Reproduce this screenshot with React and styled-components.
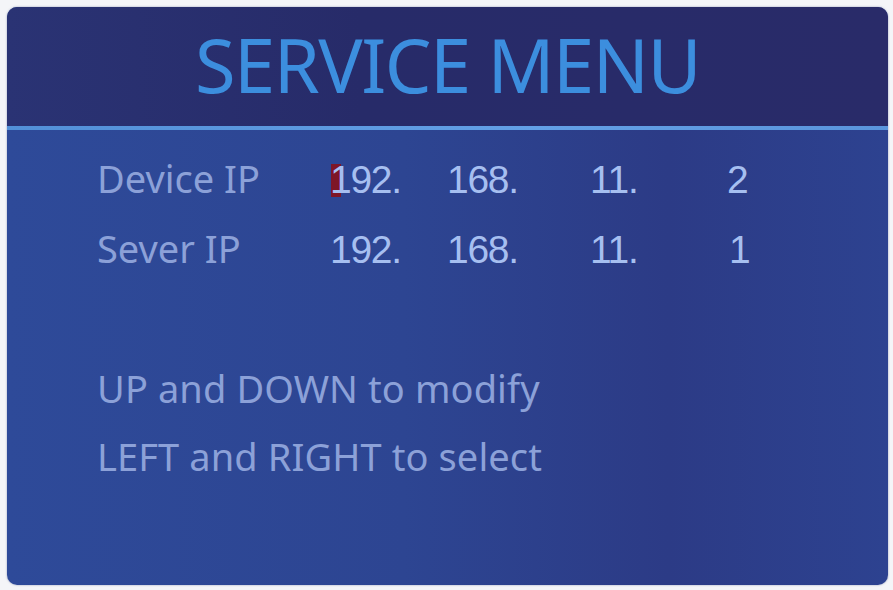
import React from "react";
import styled, { createGlobalStyle } from "styled-components";

const Global = createGlobalStyle`
  html, body { margin: 0; padding: 0; background: #f4f5f8; }
  #root { width: 893px; height: 590px; }
`;

const Page = styled.div`
  width: 893px;
  height: 590px;
  box-sizing: border-box;
  padding: 7px 5px 5px 7px;
  background: #f4f5f8;
`;

const Screen = styled.div`
  width: 100%;
  height: 100%;
  border-radius: 10px;
  overflow: hidden;
  display: flex;
  flex-direction: column;
  background: linear-gradient(90deg, #2e4a99 0%, #2d4592 45%, #2c3b86 75%, #2d4290 100%);
  box-shadow: 0 0 2px rgba(40, 60, 120, 0.5);
`;

const Header = styled.div`
  height: 119px;
  display: flex;
  align-items: flex-start;
  justify-content: center;
  background: linear-gradient(90deg, #2a3374 0%, #272b69 40%, #292b69 100%);
`;

const Title = styled.h1`
  margin: 0;
  margin-top: 21px;
  font-family: "Noto Sans", "Open Sans", sans-serif;
  font-weight: 400;
  font-size: 74px;
  letter-spacing: -1.5px;
  line-height: 1;
  color: #3c8ede;
`;

const Rule = styled.div`
  height: 4px;
  background: linear-gradient(90deg, #5290d8, #63a0e6 60%, #5a95dc);
`;

const Body = styled.div`
  flex: 1;
  padding: 24px 0 0 90px;
  display: flex;
  flex-direction: column;
`;

const IpGrid = styled.div`
  display: grid;
  grid-template-columns: 233px 117px 143px 137px auto;
  row-gap: 20px;
  align-items: baseline;
`;

const Label = styled.div`
  font-family: "Noto Sans", sans-serif;
  font-size: 38px;
  line-height: 48px;
  color: #8ca1d8;
`;

const Num = styled.div`
  font-family: "Liberation Sans", Arial, sans-serif;
  font-size: 39px;
  line-height: 48px;
  letter-spacing: -1.3px;
  color: #a6bff0;
  padding-left: ${(p) => p.$pad || 0}px;
`;

const Cursor = styled.span`
  position: relative;
  &::before {
    content: "";
    position: absolute;
    left: 1px;
    top: 6px;
    width: 10px;
    height: 33px;
    background: #7e1627;
    z-index: 0;
  }
  & > span { position: relative; z-index: 1; }
`;

const Help = styled.div`
  margin-top: 90px;
  display: flex;
  flex-direction: column;
  gap: 20px;
`;

const HelpLine = styled.div`
  font-family: "Noto Sans", sans-serif;
  font-size: 38px;
  line-height: 48px;
  letter-spacing: 0.1px;
  color: #8ca1d8;
`;

export default function App() {
  return (
    <Page>
      <Global />
      <Screen>
        <Header>
          <Title>SERVICE MENU</Title>
        </Header>
        <Rule />
        <Body>
          <IpGrid>
            <Label>Device IP</Label>
            <Num><Cursor><span>1</span></Cursor>92.</Num>
            <Num>168.</Num>
            <Num>11.</Num>
            <Num>2</Num>
            <Label>Sever IP</Label>
            <Num>192.</Num>
            <Num>168.</Num>
            <Num>11.</Num>
            <Num $pad={2}>1</Num>
          </IpGrid>
          <Help>
            <HelpLine>UP and DOWN to modify</HelpLine>
            <HelpLine>LEFT and RIGHT to select</HelpLine>
          </Help>
        </Body>
      </Screen>
    </Page>
  );
}
